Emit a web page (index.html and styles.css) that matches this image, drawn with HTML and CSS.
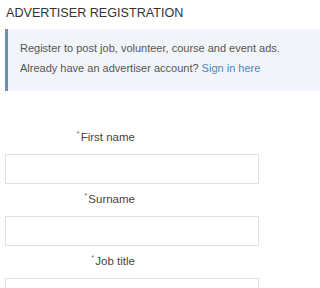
FILE: index.html
```html
<!DOCTYPE html>
<html>
<head>
<meta charset="utf-8">
<link rel="stylesheet" href="styles.css">
</head>
<body>
<div class="page">
  <h1 class="title">ADVERTISER REGISTRATION</h1>
  <div class="info">
    <p class="info-line">Register to post job, volunteer, course and event ads.</p>
    <p class="info-line">Already have an advertiser account? <a class="link" href="#">Sign in here</a></p>
  </div>
  <form class="form">
    <div class="field">
      <label class="label"><span class="req">*</span>First name</label>
      <div class="input"></div>
    </div>
    <div class="field">
      <label class="label"><span class="req">*</span>Surname</label>
      <div class="input"></div>
    </div>
    <div class="field">
      <label class="label"><span class="req">*</span>Job title</label>
      <div class="input"></div>
    </div>
  </form>
</div>
</body>
</html>
```
FILE: styles.css
```css
html, body {
  margin: 0;
  padding: 0;
  background: #fff;
}
body {
  font-family: "Liberation Sans", Arial, sans-serif;
  color: #333;
  overflow: hidden;
  height: 288px;
}
.title {
  margin: 0;
  padding: 5px 0 0 6px;
  font-size: 12.6px;
  font-weight: normal;
  line-height: 16px;
  color: #333;
}
.info {
  margin: 8px 0 0 5px;
  border-left: 3px solid #6f8fae;
  background: #f1f5f9;
  padding: 9px 0 13px 12px;
}
.info-line {
  margin: 0;
  font-size: 11px;
  line-height: 20px;
  color: #555;
  white-space: nowrap;
}
.link {
  color: #5286b6;
  text-decoration: none;
}
.form {
  margin-top: 36px;
}
.field {
  margin-bottom: 5px;
}
.label {
  display: block;
  width: 135px;
  text-align: right;
  font-size: 11.5px;
  line-height: 20px;
  color: #444;
  margin-bottom: 7px;
}
.req {
  font-size: 8px;
  vertical-align: top;
  line-height: 14px;
  color: #777;
  margin-right: 1px;
}
.input {
  margin-left: 5px;
  width: 252px;
  height: 28px;
  border: 1px solid #e0e0e0;
  background: #fff;
}
```
